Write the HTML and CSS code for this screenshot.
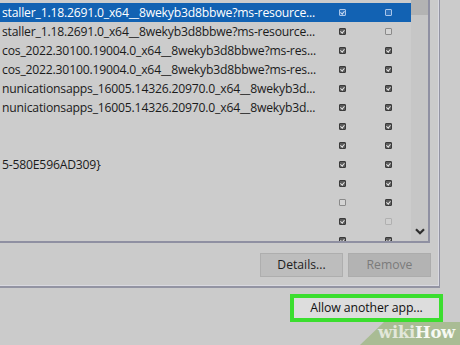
FILE: index.html
```html
<!DOCTYPE html>
<html>
<head>
<meta charset="utf-8">
<link rel="stylesheet" href="styles.css">
</head>
<body>
<div class="page">
  <div class="group">
    <div class="list">
      <div class="rows">
        <div class="row selected"><span class="name">staller_1.18.2691.0_x64__8wekyb3d8bbwe?ms-resource...</span><span class="cb on"></span><span class="cb"></span></div>
        <div class="row"><span class="name">staller_1.18.2691.0_x64__8wekyb3d8bbwe?ms-resource...</span><span class="cb on"></span><span class="cb"></span></div>
        <div class="row"><span class="name">cos_2022.30100.19004.0_x64__8wekyb3d8bbwe?ms-res...</span><span class="cb on"></span><span class="cb on"></span></div>
        <div class="row"><span class="name">cos_2022.30100.19004.0_x64__8wekyb3d8bbwe?ms-res...</span><span class="cb on"></span><span class="cb on"></span></div>
        <div class="row"><span class="name">nunicationsapps_16005.14326.20970.0_x64__8wekyb3d...</span><span class="cb on"></span><span class="cb on"></span></div>
        <div class="row"><span class="name">nunicationsapps_16005.14326.20970.0_x64__8wekyb3d...</span><span class="cb on"></span><span class="cb on"></span></div>
        <div class="row"><span class="name"></span><span class="cb on"></span><span class="cb on"></span></div>
        <div class="row"><span class="name"></span><span class="cb on"></span><span class="cb on"></span></div>
        <div class="row"><span class="name">5-580E596AD309}</span><span class="cb on"></span><span class="cb on"></span></div>
        <div class="row"><span class="name"></span><span class="cb on"></span><span class="cb on"></span></div>
        <div class="row"><span class="name"></span><span class="cb"></span><span class="cb on"></span></div>
        <div class="row"><span class="name"></span><span class="cb on"></span><span class="cb dim"></span></div>
        <div class="row"><span class="name"></span><span class="cb on"></span><span class="cb on"></span></div>
      </div>
      <div class="scroll">
        <div class="thumb"></div>
        <svg class="chev" width="10" height="7" viewBox="0 0 10 7"><path d="M1 1.2 L5 5.2 L9 1.2" fill="none" stroke="#2e2e2e" stroke-width="2.2"/></svg>
      </div>
    </div>
    <div class="buttons">
      <div class="btn">Details...</div>
      <div class="btn disabled">Remove</div>
    </div>
  </div>
  <div class="allow-row">
    <div class="allow">Allow another app...</div>
  </div>
  <div class="wm"><span class="wiki">wiki</span><span class="how">How</span></div>
</div>
</body>
</html>
```
FILE: styles.css
```css
html, body {
  margin: 0;
  padding: 0;
}
body {
  width: 460px;
  height: 345px;
  overflow: hidden;
  background: #cbcbcb;
  font-family: "Open Sans", "Noto Sans", sans-serif;
  color: #1b1b1b;
}
.page {
  position: relative;
  width: 460px;
  height: 345px;
}
.group {
  width: 439px;
  border-right: 1px solid #9394a3;
  border-bottom: 2px solid #9394a3;
  box-shadow: inset -1px -1px 0 #d9d9e0;
  height: 286px;
  display: flex;
  flex-direction: column;
}
.list {
  width: 428px;
  height: 241px;
  display: flex;
  border-right: 2px solid #8f90a2;
  border-bottom: 2px solid #8f90a2;
  background: #cccccc;
}
.rows {
  width: 412px;
  padding-top: 3px;
  overflow: hidden;
}
.row {
  height: 19px;
  display: grid;
  grid-template-columns: 1fr 46px 46px;
  align-items: center;
  font-size: 12.2px;
  letter-spacing: -0.2px;
}
.row.selected {
  background: #1262b3;
  color: #fff;
}
.name {
  white-space: nowrap;
  overflow: hidden;
  padding-left: 2px;
}
.cb {
  position: relative;
  justify-self: center;
  width: 5px;
  height: 5px;
  border: 1px solid #8a8a8a;
  background: #d4d4d4;
  border-radius: 1px;
}
.cb.on {
  border-color: #3a3a3a;
  background: #5a5a5a;
}
.cb.on::after {
  content: "";
  position: absolute;
  left: 1px;
  top: 0;
  width: 1.5px;
  height: 3px;
  border-right: 1px solid #e6e6e6;
  border-bottom: 1px solid #e6e6e6;
  transform: rotate(40deg);
}
.cb.dim {
  border-color: #b0b0b0;
  background: #cfcfcf;
}
.selected .cb {
  border-color: #a8c6ea;
  background: #2f73bd;
}
.selected .cb.on::after {
  border-color: #cfe0f4;
}
.scroll {
  width: 17px;
  background: #c6c6c6;
  display: flex;
  flex-direction: column;
  justify-content: space-between;
  align-items: center;
}
.thumb {
  width: 17px;
  height: 15px;
  background: #b3b3b3;
}
.chev {
  margin-bottom: 6px;
}
.buttons {
  display: flex;
  gap: 5px;
  margin-top: 10px;
  width: 431px;
  justify-content: flex-end;
}
.btn {
  width: 81px;
  height: 22px;
  border: 1px solid #aeaeae;
  background: #bdbdbd;
  font-size: 12.2px;
  line-height: 22px;
  text-align: center;
  color: #1d1d1d;
}
.btn.disabled {
  background: #b3b3b3;
  border-color: #acacac;
  color: #7b7b7b;
}
.allow-row {
  display: flex;
  justify-content: flex-end;
  width: 443px;
  margin-top: 6px;
}
.allow {
  width: 145px;
  height: 20px;
  border: 4px solid #3bde2f;
  background: #dddddd;
  font-size: 12.3px;
  letter-spacing: -0.1px;
  line-height: 20px;
  text-align: center;
  color: #111;
}
.wm {
  position: absolute;
  right: 0;
  bottom: 0;
  width: 100px;
  height: 23px;
  background: #a9bc94;
  clip-path: polygon(24px 0, 100% 0, 100% 100%, 0 100%);
  font-family: "DejaVu Serif", serif;
  font-weight: bold;
  font-size: 16.5px;
  line-height: 22px;
  text-align: right;
  box-sizing: border-box;
  padding-right: 5px;
  letter-spacing: -0.3px;
}
.wiki {
  color: #e2e7da;
}
.how {
  color: #f7f9f3;
}
```
